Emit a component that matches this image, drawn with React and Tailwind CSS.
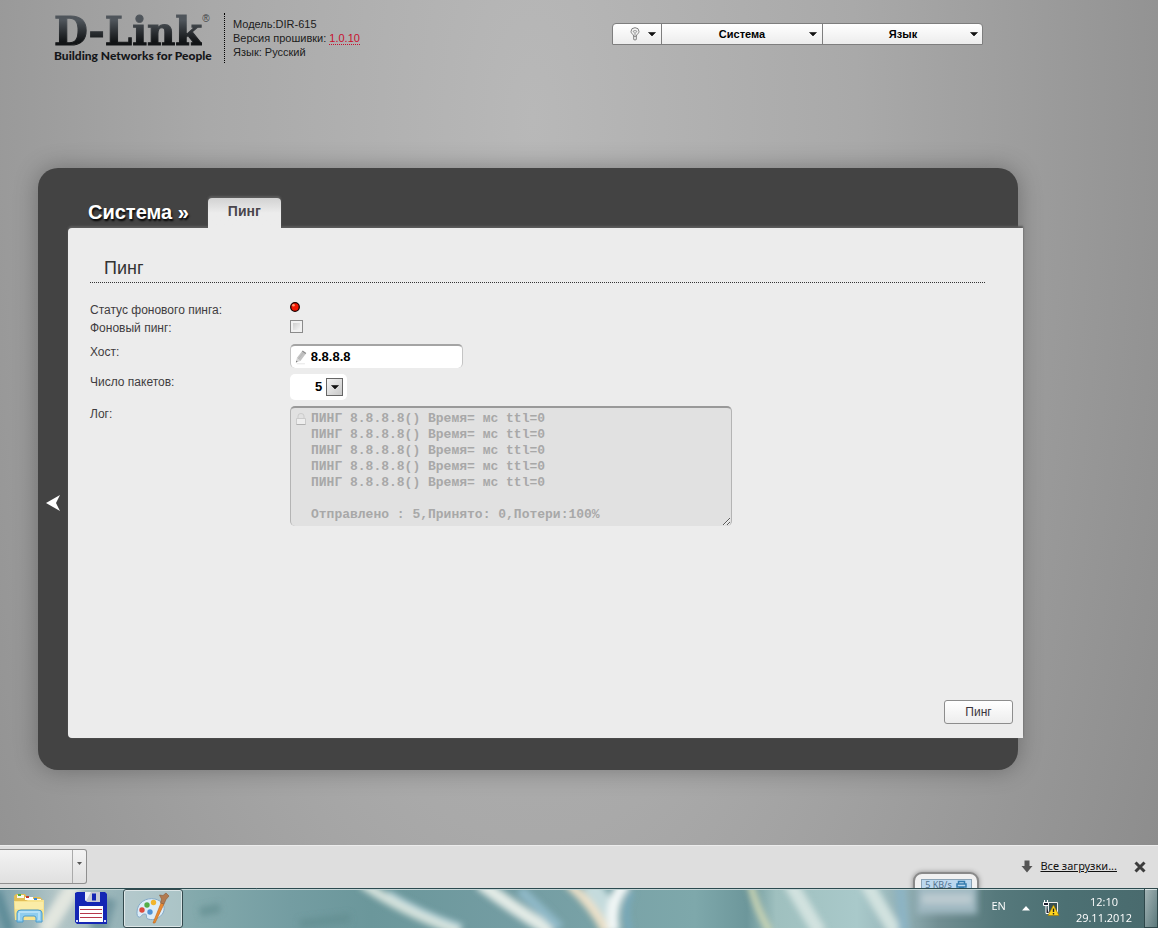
import { useState } from "react";

const LOG = [
  "ПИНГ 8.8.8.8() Время= мс ttl=0",
  "ПИНГ 8.8.8.8() Время= мс ttl=0",
  "ПИНГ 8.8.8.8() Время= мс ttl=0",
  "ПИНГ 8.8.8.8() Время= мс ttl=0",
  "ПИНГ 8.8.8.8() Время= мс ttl=0",
  "",
  "Отправлено : 5,Принято: 0,Потери:100%",
].join("\n");

function Caret() {
  return (
    <svg width="8" height="5" viewBox="0 0 8 5" aria-hidden="true">
      <path d="M0.500 .5h7L4 4z" fill="#111" stroke="#111" strokeWidth=".6" strokeLinejoin="round" />
    </svg>
  );
}

function Logo() {
  return (
    <div className="flex w-[158px] flex-col text-[#141619]">
      <div className="flex items-start">
        <span className="bg-linear-to-b from-[#4f555b] from-20% to-[#121416] to-80% bg-clip-text font-['DejaVu_Serif',serif] text-[39px] leading-[36px] font-bold whitespace-nowrap text-transparent [-webkit-text-stroke:1px_transparent]">
          D-Link
        </span>
        <span className="font-['Liberation_Sans',sans-serif] text-[10px] leading-3 text-[#3c4044]">®</span>
      </div>
      <span className="font-['Lato',sans-serif] text-xs leading-[14px] font-black whitespace-nowrap">
        Building Networks for People
      </span>
    </div>
  );
}

function Header() {
  return (
    <header className="flex w-full max-w-[983px] items-start justify-between pt-[13px] pl-[54px]">
      <div className="flex gap-3">
        <Logo />
        <div className="flex flex-col border-l border-dotted border-black pt-1 pb-1 pl-2 text-[11px] leading-[14px] text-[#1c1c1c]">
          <span>Модель:DIR-615</span>
          <span>
            Версия прошивки:{" "}
            <a href="#firmware" className="border-b border-dotted border-[#c8102e] text-[#c8102e]">1.0.10</a>
          </span>
          <span>Язык: Русский</span>
        </div>
      </div>
      <nav className="mt-[10px] flex overflow-hidden rounded-t-[4px] rounded-b-[1px] border border-[#7e7e7e] bg-linear-to-b from-white to-[#ececec] text-[11px] font-bold text-black">
        <button type="button" aria-label="Подсказки" className="flex h-5 w-[49px] items-center justify-end gap-2 border-r border-[#7e7e7e] pr-[5px]">
          <svg width="10" height="14" viewBox="0 0 10 14" fill="none" stroke="#808080" aria-hidden="true">
            <path d="M5 .7a4 3.800 0 0 0-4 3.800c0 2 2.200 2.600 2.700 4.500v3.500q1.300 1 2.600 0V9C6.800 7.100 9 6.500 9 4.500A4 3.800 0 0 0 5 .7z" fill="#f4f4f4" />
            <path d="M3 4.300q2-1.600 4 0L5 6.500zM5 6.500V9M3.700 9.500h2.600" strokeWidth=".8" />
          </svg>
          <Caret />
        </button>
        <button type="button" className="flex h-5 w-[161px] items-center border-r border-[#7e7e7e] pr-[5px]">
          <span className="flex-1 pl-[13px]">Система</span>
          <Caret />
        </button>
        <button type="button" className="flex h-5 w-[159px] items-center pr-1">
          <span className="flex-1 pl-[13px]">Язык</span>
          <Caret />
        </button>
      </nav>
    </header>
  );
}

function PingForm() {
  const [host, setHost] = useState("8.8.8.8");
  const [background, setBackground] = useState(false);
  const [count, setCount] = useState("5");
  return (
    <form className="flex flex-1 flex-col pt-7" onSubmit={(e) => e.preventDefault()}>
      <h2 className="mr-[38px] ml-[22px] border-b border-dotted border-[#333] pb-[2px] pl-[14px] text-lg leading-6 text-[#333]">Пинг</h2>
      <div className="mt-[19px] ml-[22px] flex flex-col text-xs leading-4 text-[#3f3c40]">
        <div className="flex min-h-[18px]">
          <span className="w-[200px] shrink-0">Статус фонового пинга:</span>
          <svg width="10" height="10" viewBox="0 0 10 10" role="img" aria-label="Выключено">
            <circle cx="5" cy="5" r="4.300" fill="#f31600" stroke="#190000" strokeWidth="1.300" />
            <circle cx="3.500" cy="3.300" r="1.300" fill="#ff9a70" />
          </svg>
        </div>
        <div className="flex min-h-6">
          <label htmlFor="background" className="w-[200px] shrink-0">Фоновый пинг:</label>
          <input
            id="background"
            type="checkbox"
            checked={background}
            onChange={(e) => setBackground(e.target.checked)}
            className="size-[13px] appearance-none border border-[#8b8b8b] bg-linear-to-br from-[#c4c4c4] to-white shadow-[inset_0_0_0_2px_#f1f1f1] checked:bg-[#555]"
          />
        </div>
        <div className="flex min-h-[30px]">
          <label htmlFor="host" className="w-[200px] shrink-0">Хост:</label>
          <div className="flex h-6 w-[173px] items-center gap-1 rounded-[5px] border-x border-t-2 border-x-[#c4c4c4] border-t-[#a4a4a4] bg-white pl-1">
            <svg width="13" height="16" viewBox="0 0 13 16" aria-hidden="true">
              <path d="M1 14l1-5 4 3.500z" fill="#d8d8d8" />
              <path d="M2 9l5.500-7 4 3L6 12.500z" fill="#c3c3c3" />
              <path d="M7.500 2l1-1.300 4 3-1 1.300z" fill="#8f8f8f" />
              <path d="M1 14l.4-2 1.600 1.200z" fill="#777" />
              <path d="M3.500 10.500L9 3.500" stroke="#b2b2b2" strokeWidth=".8" />
              <path d="M2 15.500h9" stroke="#e3e3e3" />
            </svg>
            <input
              id="host"
              type="text"
              value={host}
              onChange={(e) => setHost(e.target.value)}
              className="w-full min-w-0 bg-transparent text-[13px] leading-4 font-bold text-black outline-none"
            />
          </div>
        </div>
        <div className="flex min-h-8">
          <label htmlFor="count" className="w-[200px] shrink-0">Число пакетов:</label>
          <div className="relative">
            <select
              id="count"
              value={count}
              onChange={(e) => setCount(e.target.value)}
              className="block h-[26px] w-[57px] appearance-none rounded-[5px] bg-white pl-[25px] text-[13px] leading-4 font-bold text-black outline-none"
            >
              <option>1</option>
              <option>5</option>
              <option>10</option>
            </select>
            <span className="pointer-events-none absolute top-1 right-1 flex h-[18px] w-[17px] items-center justify-center border border-[#666] bg-linear-to-br from-[#f4f4f4] to-[#c8c8c8]">
              <Caret />
            </span>
          </div>
        </div>
        <div className="flex">
          <label htmlFor="log" className="w-[200px] shrink-0">Лог:</label>
          <div className="relative">
            <textarea
              id="log"
              readOnly
              value={LOG}
              className="block h-[120px] w-[442px] resize overflow-hidden rounded-[5px] border-x border-t-2 border-x-[#b4b4b4] border-t-[#999] bg-[#e1e1e1] pt-[3px] pl-5 font-['Liberation_Mono',monospace] text-[13px] leading-4 font-bold text-[#a8a8a8] outline-none"
            />
            <svg className="absolute top-[7px] left-[6px]" width="10" height="12" viewBox="0 0 10 12" fill="none" stroke="#cbcbcb" aria-hidden="true">
              <path d="M2 5V3a3 2.500 0 0 1 6 0v2" />
              <path d="M.5 5.500h9v6h-9z" fill="#eee" />
              <path d="M.5 11.500h9" stroke="#b0b0b0" />
            </svg>
          </div>
        </div>
      </div>
      <div className="mt-auto flex justify-end pr-[10px] pb-[14px]">
        <button type="submit" className="h-6 w-[69px] rounded-[3px] border border-[#8d8d8d] bg-linear-to-b from-white to-[#ededed] text-xs text-[#3a353c]">
          Пинг
        </button>
      </div>
    </form>
  );
}

function Panel() {
  return (
    <main className="mx-[38px] mt-[105px] mb-[75px] flex min-h-[600px] max-w-[980px] flex-1 flex-col rounded-[20px] bg-[#434343] pt-[30px] pb-8 shadow-[0_0_24px_rgba(0,0,0,0.3)]">
      <div className="z-10 flex h-[30px] items-end gap-[19px] pl-[50px]">
        <h1 className="text-xl leading-8 font-bold text-white [text-shadow:1px_2px_2px_#000]">Система »</h1>
        <a href="#ping" className="h-[30px] rounded-t-[4px] bg-linear-to-b from-[#d2d2d2] to-[#ececec] to-50% px-5 pt-1 text-sm leading-[18px] font-bold text-[#4a464c] shadow-[0_-2px_2px_#5c5c5c]">
          Пинг
        </a>
      </div>
      <div className="-mr-[5px] flex flex-1">
        <button type="button" aria-label="Скрыть меню" className="flex w-[30px] shrink-0 items-center justify-center pt-10">
          <svg width="14" height="16" viewBox="0 0 14 16" aria-hidden="true">
            <path d="M0 8L14 0l-4 8 4 8z" fill="#fff" />
          </svg>
        </button>
        <section className="flex min-w-0 flex-1 flex-col rounded-l-[4px] bg-[#ececec] shadow-[0_-2px_2px_#5c5c5c,1px_0_1px_#888]">
          <PingForm />
        </section>
      </div>
    </main>
  );
}

function DownloadsBar() {
  return (
    <div className="relative flex h-[43px] shrink-0 items-start justify-between overflow-hidden border-t border-[#ececec] bg-[#dedede] pt-[3px] font-['Noto_Sans',sans-serif] text-[11px] text-[#111]">
      <button type="button" aria-label="Параметры загрузки" className="flex h-[35px] w-[87px] justify-end rounded-r-[3px] border border-l-0 border-[#8f8f8f] bg-linear-to-b from-[#f3f3f3] to-[#e0e0e0]">
        <span className="flex h-full w-[14px] justify-center border-l border-[#aaa] pt-3">
          <svg width="5" height="3" viewBox="0 0 5 3" aria-hidden="true"><path d="M0 0h5L2.500 3z" fill="#555" /></svg>
        </span>
      </button>
      <div className="absolute top-[26px] right-[179px] flex h-12 w-[66px] justify-center rounded-[9px] border-2 border-[#8a8a8a] bg-[#f1f1f1] pt-[5px] shadow-[0_0_5px_#888]">
        <div className="flex h-5 w-[51px] items-start justify-center gap-1 border border-[#8ba3b5] bg-[#bcd8ee] text-[9px] leading-[9px] text-[#51718d]">
          <span>5 KB/s</span>
          <svg width="11" height="10" viewBox="0 0 11 10" fill="none" stroke="#357cae" aria-hidden="true">
            <path d="M2.500 3.500V1.500h6v2M1 4h9v3H1zM3 8.500h5" strokeWidth="1.500" />
          </svg>
        </div>
      </div>
      <div className="flex h-[35px] items-center gap-[7px] pr-3">
        <svg width="12" height="13" viewBox="0 0 12 13" aria-hidden="true">
          <path d="M3.500.5h5V6H11.500L6 12.500.5 6h3z" fill="#555" />
        </svg>
        <a href="#downloads" className="underline">Все загрузки...</a>
        <button type="button" aria-label="Закрыть" className="ml-[10px]">
          <svg width="12" height="12" viewBox="0 0 12 12" stroke="#3c3c3c" strokeWidth="3" aria-hidden="true">
            <path d="M1.500 1.500l9 9M10.500 1.500l-9 9" />
          </svg>
        </button>
      </div>
    </div>
  );
}

function Wallpaper() {
  return (
    <svg className="absolute inset-0 h-full w-full" viewBox="0 0 1158 40" preserveAspectRatio="none" aria-hidden="true">
      <defs>
        <linearGradient id="glass" x1="0" x2="1" y1="0" y2="0">
          <stop offset="0" stopColor="#7fa3ad" />
          <stop offset=".05" stopColor="#b4c6c7" />
          <stop offset=".11" stopColor="#93b1b6" />
          <stop offset=".17" stopColor="#83a9ac" />
          <stop offset=".25" stopColor="#749da2" />
          <stop offset=".32" stopColor="#6b979b" />
          <stop offset=".45" stopColor="#749da3" />
          <stop offset=".6" stopColor="#7ea8ab" />
          <stop offset=".645" stopColor="#6d979b" />
          <stop offset=".67" stopColor="#9fc0bf" />
          <stop offset=".74" stopColor="#a9c9ca" />
          <stop offset=".78" stopColor="#93b1b6" />
          <stop offset=".81" stopColor="#728f93" />
          <stop offset=".86" stopColor="#56797c" />
          <stop offset=".92" stopColor="#4c7073" />
          <stop offset="1" stopColor="#496a6d" />
        </linearGradient>
        <filter id="soft" x="-10%" y="-50%" width="120%" height="200%">
          <feGaussianBlur stdDeviation="3" />
        </filter>
      </defs>
      <path d="M0 0h1158v40H0z" fill="url(#glass)" />
      <g filter="url(#soft)" fill="none">
        <path d="M75-4L44 44" stroke="#e2e6df" strokeWidth="16" />
        <path d="M-4 4l14 40" stroke="#5f8c98" strokeWidth="10" />
        <path d="M108 10l-10 34" stroke="#7397a0" strokeWidth="18" />
        <path d="M200 24l20-4M300 36l50-6" stroke="#638d90" strokeWidth="9" opacity=".7" />
        <path d="M362-5Q400 22 460 44" stroke="#d5e2dc" strokeWidth="10" />
        <path d="M388 4Q420 24 462 38" stroke="#bcd9e2" strokeWidth="3" />
        <path d="M480-5Q510 18 552 44" stroke="#e3ebe6" strokeWidth="13" />
        <path d="M520 2L560 40" stroke="#90b9c8" strokeWidth="10" />
        <path d="M590-5l22 34" stroke="#c5dbdd" strokeWidth="18" />
        <path d="M568-5Q594 18 606 44" stroke="#eee1c8" strokeWidth="9" />
        <path d="M626-5Q608 14 614 44" stroke="#f1f6f5" strokeWidth="12" />
        <path d="M632 4Q622 20 630 44" stroke="#79abc0" strokeWidth="5" />
        <path d="M750-5Q756 20 770 44" stroke="#d3d9b4" strokeWidth="6" />
        <path d="M790-5l30 50M866-5l30 50" stroke="#d2e2df" strokeWidth="14" />
        <path d="M900-5l4 50" stroke="#8cb4c4" strokeWidth="10" />
        <path d="M917-6h60v32h-60z" fill="#9fb8c1" />
        <path d="M922 6h50v10h-50z" fill="#bccbd0" />
      </g>
      <path d="M0 .5h1158" stroke="#2c4b50" />
      <path d="M0 1.500h1158" stroke="#c3d5d6" />
    </svg>
  );
}

function FolderIcon() {
  return (
    <svg width="34" height="32" viewBox="0 0 34 32" aria-hidden="true">
      <path d="M2 4l2-2h9l2 3h13l3 3v20H3z" fill="#e2bd55" />
      <path d="M5 3h7v3H5z" fill="#f9f9ee" /><path d="M6 2h3v2H6z" fill="#4fae3c" />
      <path d="M13 5h8v3h-8z" fill="#fff" /><path d="M14 4h3v2h-3z" fill="#c43b2c" />
      <path d="M21 7h8v3h-8z" fill="#fff" /><path d="M22 6h3v2h-3z" fill="#3d87d4" />
      <path d="M2 9h12l2-1h16v20H3z" fill="#f7e38f" />
      <path d="M3 10h28v7H3z" fill="#fbefb0" opacity=".7" />
      <path d="M5 21q0-3 4-3h17q4 0 4 3v9h-6v-4q0-2-2-2h-9q-2 0-2 2v4H5z" fill="#8fcdee" stroke="#4a9ccc" />
      <path d="M7 20h21M7 21v7M27 21v7" stroke="#d9f3ff" />
    </svg>
  );
}

function FloppyIcon() {
  return (
    <svg width="32" height="32" viewBox="0 0 32 32" aria-hidden="true">
      <path d="M2 0h28l2 2v30H2l-2-2V1z" fill="#1426b4" />
      <path d="M10 0h15v10H12l-2-2z" fill="#c9ccd5" />
      <path d="M10 0h6l-5 9-1-1z" fill="#eef0f5" />
      <path d="M17 1.500h4v7h-4z" fill="#1426b4" />
      <path d="M4 14h24v16H4z" fill="#fff" />
      <path d="M5 17.500h22M5 21.500h22M5 25.500h22" stroke="#b5384b" />
      <path d="M1 28h2v2H1zM29 28h2v2h-2z" fill="#dce0ff" />
    </svg>
  );
}

function PaintIcon() {
  return (
    <svg width="34" height="32" viewBox="0 0 34 32" aria-hidden="true">
      <path d="M1 20C1 11 10 5 19 7c8 2 11 8 8 14-3 5-9 8-15 6-3-1 0-5-3-5-4 0-4 4-6 3-2 0-2-3-2-5z" fill="#dcecf8" stroke="#83a9c7" />
      <circle cx="6" cy="18" r="2.700" fill="#dc4b3e" />
      <circle cx="11" cy="13" r="2.700" fill="#55ac47" />
      <circle cx="17.500" cy="10.500" r="2.700" fill="#f1b52d" />
      <circle cx="14" cy="20" r="2.700" fill="#4f91d5" />
      <path d="M17 31l8-20 3 1-9 19z" fill="#e98a32" stroke="#bd6419" strokeWidth=".6" />
      <path d="M24.500 11l1-4-2-4 3.500.5 3-2.500 3 3-3 3.500-2 4.500z" fill="#b27b50" stroke="#8a5a37" strokeWidth=".6" />
    </svg>
  );
}

function Taskbar() {
  return (
    <footer className="relative h-10 shrink-0 overflow-hidden font-['Open_Sans',sans-serif] text-[11px] text-white">
      <Wallpaper />
      <div className="relative flex h-full items-center">
        <button type="button" aria-label="Проводник" className="ml-3"><FolderIcon /></button>
        <button type="button" aria-label="Диспетчер файлов" className="ml-[29px]"><FloppyIcon /></button>
        <button type="button" aria-label="Paint" className="ml-4 flex h-[39px] w-[60px] items-center justify-center rounded-[3px] border border-[#33494d] bg-white/30 shadow-[inset_0_0_0_1px_rgba(255,255,255,0.55)]">
          <PaintIcon />
        </button>
        <div className="ml-auto flex h-full items-center">
          <span className="pb-1">EN</span>
          <button type="button" aria-label="Скрытые значки" className="ml-4">
            <svg width="8" height="5" viewBox="0 0 8 5" aria-hidden="true"><path d="M4 0l4 4.500H0z" fill="#fff" /></svg>
          </button>
          <svg className="ml-[13px]" width="16" height="16" viewBox="0 0 16 16" aria-label="Сеть" role="img">
            <path d="M5.500 2.500h9v10h-9z" fill="#385054" stroke="#eee" />
            <path d="M.5 2.500h5v3h-5zM1.500 0v2M4.500 0v2M3 5.500V13.500h3" fill="#223" stroke="#fff" />
            <path d="M10.500 5L16 15.500H5z" fill="#ffd51d" stroke="#9c7600" strokeWidth=".6" />
            <path d="M10.500 8.500v3.500M10.500 13v1.500" stroke="#222" strokeWidth="1.400" />
          </svg>
          <div className="ml-[17px] flex flex-col pt-1 text-center leading-4">
            <span>12:10</span>
            <span>29.11.2012</span>
          </div>
          <button type="button" aria-label="Свернуть все окна" className="ml-3 h-full w-[14px] border border-[#2f484b] bg-linear-to-br from-white/50 to-white/10" />
        </div>
      </div>
    </footer>
  );
}

export default function App() {
  return (
    <div className="flex min-h-screen flex-col bg-[#909090] font-['Liberation_Sans',Arial,sans-serif]">
      <div className="flex flex-1 flex-col bg-[radial-gradient(ellipse_720px_1600px_at_46%_14%,#b8b8b8,#a9a9a9_45%,#8c8c8c)]">
        <Header />
        <Panel />
      </div>
      <DownloadsBar />
      <Taskbar />
    </div>
  );
}
